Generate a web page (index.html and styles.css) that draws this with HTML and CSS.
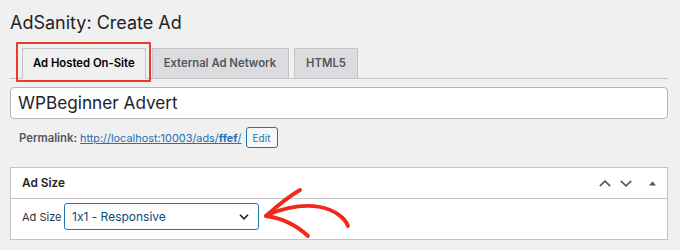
FILE: index.html
```html
<!DOCTYPE html>
<html lang="en">
<head>
<meta charset="utf-8">
<title>AdSanity: Create Ad</title>
<link rel="stylesheet" href="styles.css">
</head>
<body>
<div class="page">
  <h1 class="title">AdSanity: Create Ad</h1>
  <nav class="tabs">
    <a class="tab tab-active">Ad Hosted On-Site<span class="highlight"></span></a>
    <a class="tab">External Ad Network</a>
    <a class="tab">HTML5</a>
  </nav>
  <div class="title-input">WPBeginner Advert</div>
  <div class="permalink">
    <span class="perm-label">Permalink:</span>
    <a class="perm-link">http://localhost:10003/ads/<b>ffef</b>/</a>
    <span class="edit-btn">Edit</span>
  </div>
  <div class="postbox">
    <div class="postbox-header">
      <span class="postbox-title">Ad Size</span>
      <span class="handle-icons">
        <svg class="ic-up" width="12" height="7" viewBox="0 0 12 7"><polyline points="0.8,6.2 6,1.2 11.2,6.2" fill="none" stroke="#50575e" stroke-width="1.6"/></svg>
        <svg class="ic-down" width="12" height="7" viewBox="0 0 12 7"><polyline points="0.8,0.8 6,5.8 11.2,0.8" fill="none" stroke="#50575e" stroke-width="1.6"/></svg>
        <svg class="ic-tri" width="7" height="5" viewBox="0 0 7 5"><polygon points="0,4.5 3.5,0.5 7,4.5" fill="#50575e"/></svg>
      </span>
    </div>
    <div class="postbox-body">
      <span class="field-label">Ad Size</span>
      <div class="select">
        <span>1x1 - Responsive</span>
        <svg width="10" height="6" viewBox="0 0 10 6"><polyline points="1,0.8 5,4.8 9,0.8" fill="none" stroke="#1d2327" stroke-width="1.6"/></svg>
      </div>
      <svg class="arrow" width="100" height="60" viewBox="0 0 100 60">
        <g fill="none" stroke="#f3271b" stroke-width="3.8" stroke-linecap="round" stroke-linejoin="round">
          <path d="M8,33 C18,24 28,15 42,7"/>
          <path d="M8,33 C24,35 38,42 50,53"/>
          <path d="M9,32 C26,25 45,21 62,24 C77,27 87,35 90,43"/>
        </g>
      </svg>
    </div>
  </div>
</div>
</body>
</html>
```

FILE: styles.css
```css
* { box-sizing: border-box; }
html, body { margin: 0; padding: 0; }
body {
  background: #f0f0f1;
  font-family: Inter, "Liberation Sans", Arial, sans-serif;
  font-feature-settings: "calt" 0;
  color: #1d2327;
  width: 680px;
  height: 250px;
  overflow: hidden;
}
.page { padding: 0 12px 0 10px; }
.title {
  margin: 0;
  padding-top: 11px;
  font-size: 18px;
  line-height: 24px;
  font-weight: 400;
  color: #1d2327;
}
.tabs {
  display: flex;
  align-items: flex-end;
  margin-top: 13px;
  padding-left: 12px;
  border-bottom: 1px solid #c3c4c7;
  height: 31px;
}
.tab {
  position: relative;
  display: block;
  margin-bottom: -1px;
  margin-left: 6px;
  padding: 0 10px;
  line-height: 29px;
  font-size: 11.3px;
  font-weight: 600;
  color: #50575e;
  background: #dcdcde;
  border: 1px solid #c3c4c7;
  white-space: nowrap;
}
.tab:first-child { margin-left: 0; }
.tab-wide { padding: 0 12px; }
.tab-active {
  background: #f0f0f1;
  color: #000;
  border-bottom-color: #f0f0f1;
}
.tab:nth-child(2) { margin-left: 6px; padding: 0 12px 0 11px; }
.tab:nth-child(3) { margin-left: 5px; padding: 0 11px; }
.highlight {
  position: absolute;
  left: -7px;
  top: -7px;
  right: -6px;
  bottom: -4px;
  border: 2px solid #ec3a2e;
  border-radius: 1px;
}
.title-input {
  margin-top: 8px;
  height: 32px;
  padding: 0 7px;
  background: #fff;
  border: 1px solid #b3b5b8;
  border-radius: 4px;
  font-size: 17.2px;
  line-height: 30px;
  color: #1d2327;
}
.permalink {
  margin-top: 8px;
  height: 21px;
  display: flex;
  align-items: center;
  padding-left: 9px;
  font-size: 10.9px;
}
.perm-label { font-weight: 600; color: #50575e; margin-right: 3px; font-size: 11.3px; }
.perm-link { color: #2271b1; text-decoration: underline; }
.perm-link b { font-weight: 700; }
.edit-btn {
  margin-left: 4px;
  height: 21px;
  width: 32px;
  border: 1px solid #2271b1;
  border-radius: 3px;
  background: #f6f7f7;
  color: #2271b1;
  font-size: 10px;
  display: flex;
  align-items: center;
  justify-content: center;
}
.postbox {
  margin-top: 19px;
  background: #fff;
  border: 1px solid #c3c4c7;
}
.postbox-header {
  height: 31px;
  border-bottom: 1px solid #c3c4c7;
  display: flex;
  align-items: center;
  padding: 0 11px 0 11px;
}
.postbox-title { font-size: 11.8px; font-weight: 600; color: #1d2327; }
.handle-icons {
  margin-left: auto;
  display: flex;
  align-items: center;
}
.handle-icons svg { display: block; }
.ic-down { margin-left: 9px; }
.ic-tri { margin-left: 17px; }
.postbox-body {
  position: relative;
  display: flex;
  align-items: center;
  padding: 4px 11px 9px;
}
.field-label { font-size: 11px; color: #2c3338; width: 42px; }
.select {
  width: 195px;
  height: 27px;
  border: 1px solid #2271b1;
  border-radius: 3px;
  display: flex;
  align-items: center;
  justify-content: space-between;
  padding: 0 9px 0 7px;
  font-size: 12px;
  color: #0a4b78;
}
.select svg { display: block; }
.arrow {
  position: absolute;
  left: 247px;
  top: -16px;
}
```
